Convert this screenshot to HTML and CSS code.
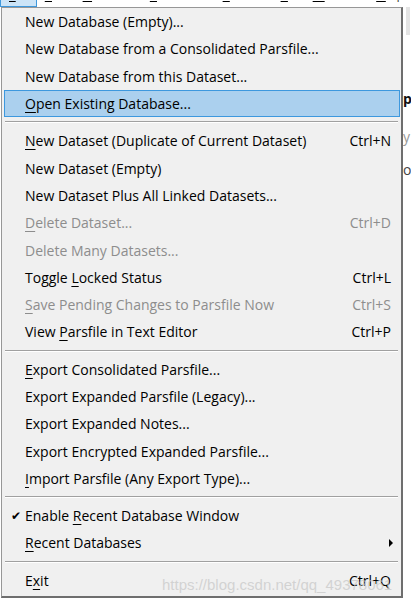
FILE: index.html
```html
<!DOCTYPE html>
<html>
<head>
<meta charset="utf-8">
<link rel="stylesheet" href="styles.css">
</head>
<body>
<div class="menubar">
  <span class="mb-item mb-active"><span class="mb-text"><u>F</u>ile</span></span>
  <span class="mb-item"><span class="mb-text"><u>E</u>dit</span></span>
  <span class="mb-item"><span class="mb-text"><u>D</u>atasets</span></span>
  <span class="mb-item"><span class="mb-text"><u>S</u>cenarios</span></span>
  <span class="mb-item"><span class="mb-text"><u>T</u>ools</span></span>
  <span class="mb-item"><span class="mb-text">Vi<u>e</u>w</span></span>
  <span class="mb-item"><span class="mb-text"><u>W</u>indow</span></span>
  <span class="mb-item"><span class="mb-text"><u>H</u>elp</span></span>
</div>
<div class="main">
  <div class="menu">
    <div class="item"><span class="label">New Database (Empty)...</span></div>
    <div class="item"><span class="label">New Database from a Consolidated Parsfile...</span></div>
    <div class="item"><span class="label">New Database from this Dataset...</span></div>
    <div class="item hover"><span class="label"><u>O</u>pen Existing Database...</span></div>
    <div class="sep"></div>
    <div class="item"><span class="label"><u>N</u>ew Dataset (Duplicate of Current Dataset)</span><span class="key">Ctrl+N</span></div>
    <div class="item"><span class="label">New Dataset (Empty)</span></div>
    <div class="item"><span class="label">New Dataset Plus All Linked Datasets...</span></div>
    <div class="item disabled"><span class="label"><u>D</u>elete Dataset...</span><span class="key">Ctrl+D</span></div>
    <div class="item disabled"><span class="label">Delete Many Datasets...</span></div>
    <div class="item"><span class="label">Toggle <u>L</u>ocked Status</span><span class="key">Ctrl+L</span></div>
    <div class="item disabled"><span class="label"><u>S</u>ave Pending Changes to Parsfile Now</span><span class="key">Ctrl+S</span></div>
    <div class="item"><span class="label">View <u>P</u>arsfile in Text Editor</span><span class="key">Ctrl+P</span></div>
    <div class="sep"></div>
    <div class="item"><span class="label"><u>E</u>xport Consolidated Parsfile...</span></div>
    <div class="item"><span class="label">Export Expanded Parsfile (Legacy)...</span></div>
    <div class="item"><span class="label">Export Expanded Notes...</span></div>
    <div class="item"><span class="label">Export Encrypted Expanded Parsfile...</span></div>
    <div class="item"><span class="label"><u>I</u>mport Parsfile (Any Export Type)...</span></div>
    <div class="sep"></div>
    <div class="item"><span class="check">&#10004;</span><span class="label">Enable <u>R</u>ecent Database Window</span></div>
    <div class="item"><span class="label"><u>R</u>ecent Databases</span><span class="arrow"></span></div>
    <div class="sep"></div>
    <div class="item"><span class="label">E<u>x</u>it</span><span class="key">Ctrl+Q</span></div>
    <div class="watermark">https://blog.csdn.net/qq_49378061</div>
  </div>
  <div class="behind">
    <div class="scrollstub"></div>
    <div class="frag f1">p</div>
    <div class="frag f2">y</div>
    <div class="frag f3">or</div>
  </div>
</div>
</body>
</html>
```
FILE: styles.css
```css
html, body {
  margin: 0;
  padding: 0;
  width: 411px;
  height: 598px;
  overflow: hidden;
  background: #ffffff;
  font-family: "Open Sans", "Noto Sans", sans-serif;
}

.menubar {
  height: 7px;
  overflow: hidden;
  display: flex;
  background: #ffffff;
  font-size: 13px;
  color: #000;
}
.mb-item {
  display: block;
  height: 7px;
  overflow: hidden;
  padding: 0 7px 0 8px;
  box-sizing: border-box;
  color: #444;
}
.mb-text {
  display: block;
  line-height: 14px;
  margin-top: -13px;
  white-space: nowrap;
}
.mb-item u {
  text-underline-offset: 2px;
  color: #000;
}
.mb-active {
  width: 37px;
  background: #cce4f7;
  border: 1px solid #3f98dc;
  border-top: none;
}

.main {
  display: flex;
  height: 591px;
}

.menu {
  position: relative;
  width: 402px;
  box-sizing: border-box;
  margin-left: 1px;
  background: #f0f0f0;
  border: 1px solid #979797;
  border-right: 2px solid #6e6e6e;
  border-bottom: 2px solid #6e6e6e;
  padding: 0 1px 0 2px;
  font-size: 14px;
  color: #000;
}

.item {
  height: 27.3px;
  display: flex;
  align-items: center;
  padding: 0 9px 0 21px;
  box-sizing: border-box;
  position: relative;
  white-space: nowrap;
}
.item .label {
  flex: 1;
}
.item u {
  text-underline-offset: 3px;
  text-decoration-thickness: 1px;
}
.item .key {
  text-align: right;
}
.item.disabled {
  color: #8d8d8d;
}
.item.hover {
  background: #abd0ee;
  border: 1px solid #3d98de;
  padding-left: 20px;
}
.check {
  position: absolute;
  left: 7px;
  font-size: 12px;
  font-family: "DejaVu Sans", sans-serif;
}
.arrow {
  width: 0;
  height: 0;
  border-top: 4px solid transparent;
  border-bottom: 4px solid transparent;
  border-left: 4px solid #000;
  margin-right: -2px;
}

.sep {
  height: 10px;
  display: flex;
  flex-direction: column;
  justify-content: center;
  padding: 0 2px 0 1px;
}
.sep::before {
  content: "";
  display: block;
  height: 1px;
  background: #a0a0a0;
  border-bottom: 1px solid #ffffff;
}

.watermark {
  position: absolute;
  left: 160px;
  bottom: 3px;
  font-family: "Liberation Sans", sans-serif;
  font-size: 15px;
  color: rgba(200, 200, 200, 0.75);
  pointer-events: none;
}

.behind {
  flex: 1;
  position: relative;
  background: #ffffff;
  overflow: hidden;
  font-size: 14px;
}
.scrollstub {
  position: absolute;
  left: 3px;
  top: 0;
  width: 4px;
  height: 28px;
  background: #e4e4e4;
}
.frag {
  position: absolute;
  left: 0px;
}
.f1 { top: 82px; font-weight: bold; color: #111; }
.f2 { top: 120px; color: #999; }
.f3 { top: 153px; color: #444; }
```
